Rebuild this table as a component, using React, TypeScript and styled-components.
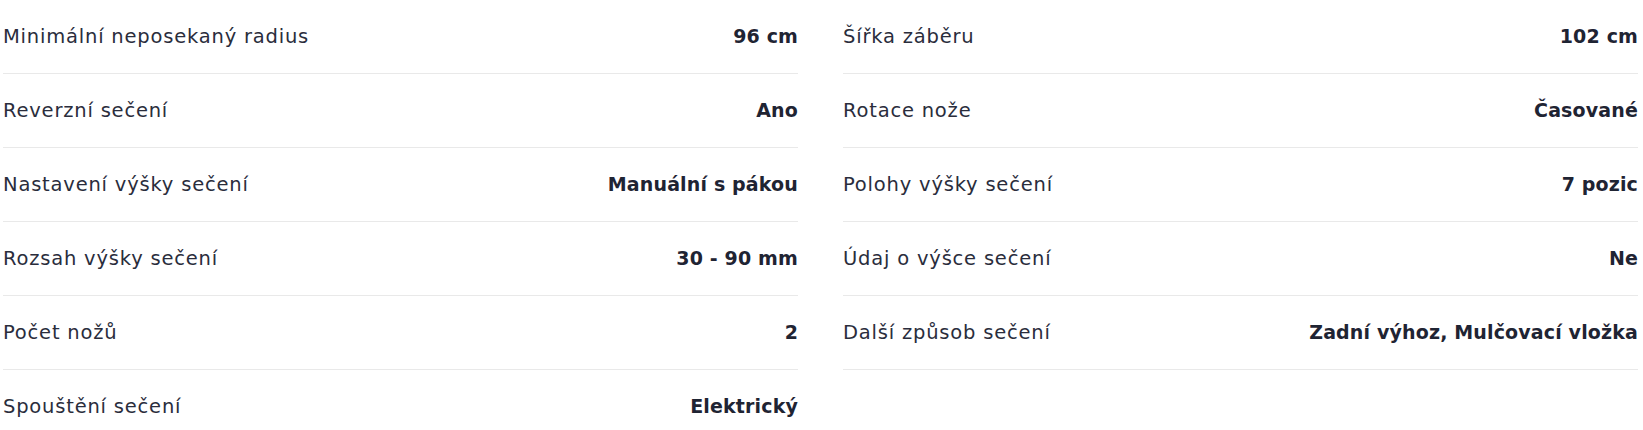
import * as React from 'react'
import styled, { createGlobalStyle } from 'styled-components'

interface Spec {
  label: string,
  value: string
}

const GlobalStyle = createGlobalStyle`
  body {
    margin: 0;
    background: #ffffff;
    font-family: 'DejaVu Sans', 'Open Sans', sans-serif;
  }
`

const Wrapper = styled.div`
  display: grid;
  grid-template-columns: 1fr 1fr;
  column-gap: 45px;
  width: 1635px;
  margin-left: 3px;
  align-items: start;
`

const Column = styled.div`
  display: flex;
  flex-direction: column;
`

const Row = styled.div`
  display: flex;
  justify-content: space-between;
  align-items: center;
  padding: 23px 0;
  border-bottom: 1px solid #e9e9e9;
`

const Label = styled.span`
  font-size: 19.5px;
  line-height: 27px;
  color: #2a2d3c;
  letter-spacing: 0.8px;
`

const Value = styled.span`
  font-size: 19px;
  line-height: 27px;
  font-weight: 700;
  color: #1f2433;
  letter-spacing: 0.15px;
`

const left: Array<Spec> = [
  { label: 'Minimální neposekaný radius', value: '96 cm' },
  { label: 'Reverzní sečení', value: 'Ano' },
  { label: 'Nastavení výšky sečení', value: 'Manuální s pákou' },
  { label: 'Rozsah výšky sečení', value: '30 - 90 mm' },
  { label: 'Počet nožů', value: '2' },
  { label: 'Spouštění sečení', value: 'Elektrický' }
]

const right: Array<Spec> = [
  { label: 'Šířka záběru', value: '102 cm' },
  { label: 'Rotace nože', value: 'Časované' },
  { label: 'Polohy výšky sečení', value: '7 pozic' },
  { label: 'Údaj o výšce sečení', value: 'Ne' },
  { label: 'Další způsob sečení', value: 'Zadní výhoz, Mulčovací vložka' }
]

const App: React.FunctionComponent = () => {
  return (
    <>
      <GlobalStyle />
      <Wrapper>
        {
          [left, right].map((list, col) => (
            <Column key={`col-${col}`}>
              {
                list.map((item: Spec) => (
                  <Row key={item.label}>
                    <Label>{item.label}</Label>
                    <Value>{item.value}</Value>
                  </Row>
                ))
              }
            </Column>
          ))
        }
      </Wrapper>
    </>
  )
}

export default App
